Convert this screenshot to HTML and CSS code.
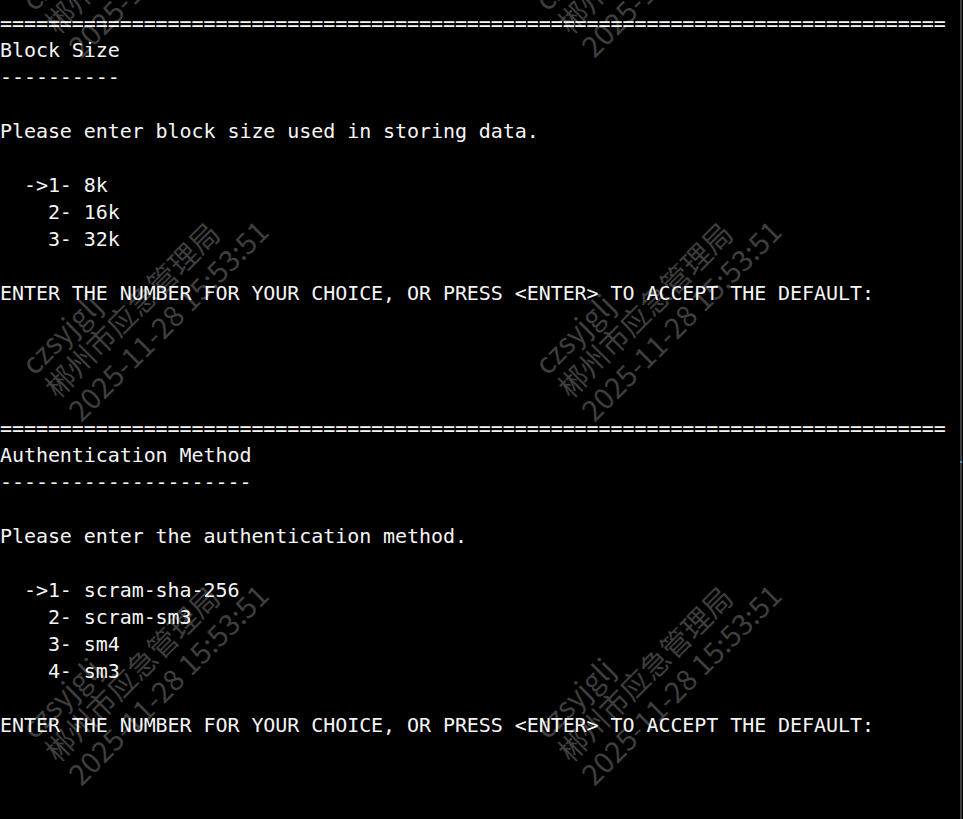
FILE: index.html
```html
<!DOCTYPE html>
<html lang="en">
<head>
<meta charset="utf-8">
<title>Terminal</title>
<link rel="stylesheet" href="styles.css">
</head>
<body>
<div class="screen">
<pre class="term">===============================================================================
Block Size
----------

Please enter block size used in storing data.

  -&gt;1- 8k
    2- 16k
    3- 32k

ENTER THE NUMBER FOR YOUR CHOICE, OR PRESS &lt;ENTER&gt; TO ACCEPT THE DEFAULT:




===============================================================================
Authentication Method
---------------------

Please enter the authentication method.

  -&gt;1- scram-sha-256
    2- scram-sm3
    3- sm4
    4- sm3

ENTER THE NUMBER FOR YOUR CHOICE, OR PRESS &lt;ENTER&gt; TO ACCEPT THE DEFAULT:
</pre>
<div class="scrollbar"><div class="thumb"></div></div>
<div class="watermarks" aria-hidden="true">
  <div class="wm"><div>czsyjglj</div><div>郴州市应急管理局</div><div>2025-11-28 15:53:51</div></div>
  <div class="wm"><div>czsyjglj</div><div>郴州市应急管理局</div><div>2025-11-28 15:53:51</div></div>
  <div class="wm"><div>czsyjglj</div><div>郴州市应急管理局</div><div>2025-11-28 15:53:51</div></div>
  <div class="wm"><div>czsyjglj</div><div>郴州市应急管理局</div><div>2025-11-28 15:53:51</div></div>
  <div class="wm"><div>czsyjglj</div><div>郴州市应急管理局</div><div>2025-11-28 15:53:51</div></div>
  <div class="wm"><div>czsyjglj</div><div>郴州市应急管理局</div><div>2025-11-28 15:53:51</div></div>
</div>
</div>
</body>
</html>
```
FILE: styles.css
```css
html, body {
  margin: 0;
  padding: 0;
  background: #000;
}
.screen {
  position: relative;
  width: 963px;
  height: 819px;
  overflow: hidden;
  display: flex;
  background: #000;
}
.term {
  flex: 1;
  margin: 0;
  padding: 10px 0 0 0;
  font-family: "DejaVu Sans Mono", "Liberation Mono", monospace;
  font-size: 20px;
  letter-spacing: -0.07px;
  line-height: 27px;
  color: #f5f5f5;
  white-space: pre;
  overflow: hidden;
}
.scrollbar {
  width: 2px;
  margin-right: 1px;
  background: #3c3c3c;
}
.thumb {
  margin-top: 461px;
  height: 2px;
  background: #3a96dd;
}
.watermarks {
  position: absolute;
  left: 14px;
  top: -8px;
  display: grid;
  grid-template-columns: repeat(2, 513px);
  grid-auto-rows: 364px;
  pointer-events: none;
}
.wm {
  transform: rotate(-45deg);
  transform-origin: 0 0;
  white-space: nowrap;
  font-family: "Noto Sans CJK SC", "Noto Sans", sans-serif;
  font-size: 29px;
  line-height: 33px;
  color: rgba(255, 255, 255, 0.25);
}
```
